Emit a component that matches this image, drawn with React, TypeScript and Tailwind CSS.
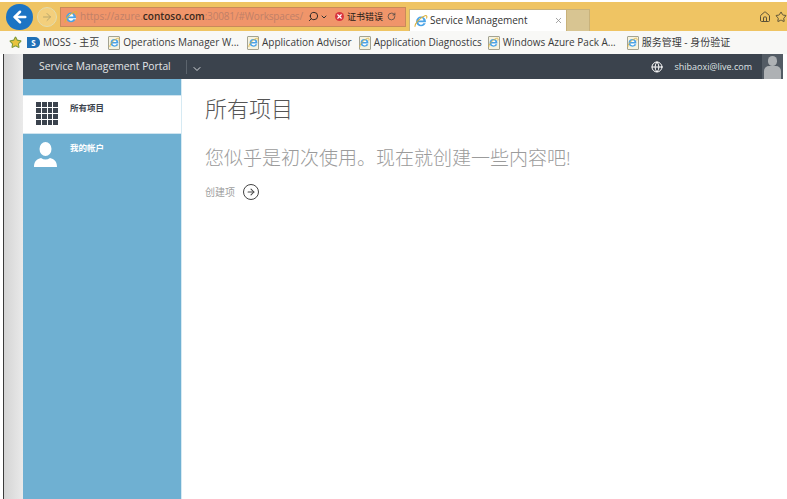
import { ArrowLeft, ArrowRight, ChevronDown, Globe, Home, RotateCw, Search, Star, X } from "lucide-react";

const IeIcon = ({ size = 12 }: { size?: number }) => (
  <svg width={size} height={size} viewBox="0 0 16 16" className="shrink-0">
    <circle cx="8" cy="8.5" r="5.6" fill="#4aa3e6" />
    <path d="M5.2 7.4h5.6a2.8 2.8 0 0 0-5.6 0z" fill="#fff" />
    <path d="M4.9 9.4a3 3 0 0 0 5.7 1.1h3.2V9.4z" fill="#fff" />
    <path d="M1.3 14.6C.3 12 6 4 12.6 1.9c2.2-.6 2.6 1.2 1.6 3.3" fill="none" stroke="#e0b23a" strokeWidth="1.2" />
  </svg>
);

const PageIcon = () => (
  <span className="flex h-[14px] w-[12px] shrink-0 items-center justify-center rounded-[1px] border border-[#a3a392] bg-[#f7f3df]">
    <IeIcon size={11} />
  </span>
);

const Bookmark = ({ label, className }: { label: string; className?: string }) => (
  <div className={`flex items-center gap-[3px] ${className ?? ""}`}>
    <PageIcon />
    <span className="whitespace-nowrap">{label}</span>
  </div>
);

const App = () => {
  return (
    <div className="flex h-[499px] w-[787px] flex-col overflow-hidden bg-white font-['Open_Sans','Noto_Sans_CJK_SC',sans-serif]">
      {/* browser tabs + address */}
      <div className="mt-[2px] flex h-[29px] items-center bg-[#efc463] pl-[6px]">
        <div className="flex h-[26px] w-[27px] items-center justify-center rounded-full bg-[#1c74c4]">
          <ArrowLeft size={18} strokeWidth={3.4} className="text-white" />
        </div>
        <div className="ml-[4px] flex h-[20px] w-[20px] items-center justify-center rounded-full border border-[#e2dcae] bg-[#f3cf7c]">
          <ArrowRight size={12} className="text-[#b9a76c]" />
        </div>
        <div className="ml-[3px] flex h-[20px] w-[346px] items-center border border-[#c98a5a] bg-[#f0956a] pl-[3px] text-[10px]">
          <IeIcon size={14} />
          <span className="ml-[2px] text-[#c08068]">https://azure.</span>
          <span className="font-semibold text-[#3a2a20]">contoso.com</span>
          <span className="tracking-[-0.15px] text-[#c08068]">:30081/#Workspaces/</span>
          <Search size={11} strokeWidth={2} className="ml-[5px] -scale-x-100 text-[#222]" />
          <ChevronDown size={8} strokeWidth={3} className="ml-[1px] text-[#333]" />
          <span className="ml-[7px] flex h-[9px] w-[9px] items-center justify-center rounded-full bg-[#d8343f]">
            <X size={7} strokeWidth={4} className="text-white" />
          </span>
          <span className="ml-[3px] whitespace-nowrap text-[9px] text-[#2a2018]">证书错误</span>
          <RotateCw size={9} className="ml-[4px] text-[#444]" />
        </div>
        <div className="ml-[3px] flex h-[22px] w-[158px] items-center self-end border border-b-0 border-[#c9b27a] bg-white pl-[4px] text-[10px] text-[#333]">
          <IeIcon size={14} />
          <span className="ml-[2px]">Service Management</span>
          <X size={9} className="ml-auto mr-[3px] text-[#8a8a8a]" />
        </div>
        <div className="h-[22px] w-[23px] self-end border-r border-t border-[#c9b27a] bg-[#d8c592]" />
        <div className="ml-auto flex items-center gap-[4px] overflow-hidden">
          <Home size={12} className="text-[#5a5138]" />
          <Star size={12} className="text-[#5a5138]" />
        </div>
      </div>

      {/* favorites bar */}
      <div className="flex h-[23px] items-center bg-[#f8f8f6] pl-[9px] text-[10px] text-[#3a3a3a]">
        <Star size={13} fill="#e8c33c" className="text-[#7d9a3a]" />
        <span className="ml-[5px] flex h-[11px] w-[13px] items-center justify-center rounded-r-[5px] bg-[#1f70b8] text-[8px] font-bold text-white">S</span>
        <span className="ml-[3px] whitespace-nowrap">MOSS - 主页</span>
        <Bookmark label="Operations Manager W..." className="ml-[9px]" />
        <Bookmark label="Application Advisor" className="ml-[8px]" />
        <Bookmark label="Application Diagnostics" className="ml-[7px]" />
        <Bookmark label="Windows Azure Pack A..." className="ml-[6px]" />
        <Bookmark label="服务管理 - 身份验证" className="ml-[11px]" />
      </div>

      {/* page */}
      <div className="flex min-h-0 flex-1">
        <div className="ml-[3px] w-[20px] shrink-0 border-l border-[#3a3a3a] bg-gradient-to-r from-[#d4d4d4] to-[#eaeaea]" />
        <div className="flex min-w-0 flex-1 flex-col">
          <header className="mr-[4px] flex h-[25px] shrink-0 items-center bg-[#3b434d] pl-[16px] text-[10.3px] text-[#e4e6e8]">
            <span>Service Management Portal</span>
            <span className="ml-[15px] h-[14px] w-px bg-[#5c646d]" />
            <ChevronDown size={12} className="ml-[4px] mt-[4px] text-[#d5d8da]" />
            <Globe size={12} className="ml-auto text-white" />
            <span className="ml-[11px] text-[9px] text-[#dfe2e4]">shibaoxi@live.com</span>
            <div className="relative ml-[10px] h-[25px] w-[21px] overflow-hidden bg-[#535b64]">
              <span className="absolute left-[6px] top-[2px] h-[10px] w-[9px] rounded-full bg-[#aeb1b4]" />
              <span className="absolute left-[2px] top-[12px] h-[13px] w-[17px] rounded-t-[5px] bg-[#aeb1b4]" />
            </div>
          </header>
          <div className="flex min-h-0 flex-1">
            <aside className="w-[159px] shrink-0 border-r border-[#d6eaf3] bg-[#6fb0d2] pt-[16px]">
              <div className="flex h-[39px] border-y border-[#cfe4ef] bg-white pl-[13px] pt-[6px]">
                <div className="grid h-[23px] w-[22px] grid-cols-4 gap-px">
                  {Array.from({ length: 16 }).map((_, i) => (
                    <span key={i} className="bg-[#3b434d]" />
                  ))}
                </div>
                <span className="ml-[12px] text-[8.5px] font-bold leading-[12px] text-[#3b434d]">所有项目</span>
              </div>
              <div className="flex pl-[11px] pt-[8px]">
                <svg width="23" height="25" viewBox="0 0 23 25" className="shrink-0">
                  <ellipse cx="11.5" cy="7" rx="6" ry="7" fill="#fff" />
                  <path d="M0 25c0-6 3-8 7-9 3 2 6 2 9 0 4 1 7 3 7 9z" fill="#fff" />
                </svg>
                <span className="ml-[13px] text-[8.5px] font-bold leading-[12px] text-white">我的帐户</span>
              </div>
            </aside>
            <main className="min-w-0 flex-1 pl-[23px] pt-[15px]">
              <h1 className="text-[22px] font-light leading-[28px] text-[#555]">所有项目</h1>
              <p className="mt-[23px] text-[19px] font-light leading-[26px] text-[#9b9b9b]">您似乎是初次使用。现在就创建一些内容吧!</p>
              <div className="mt-[13px] flex items-center">
                <span className="text-[10px] text-[#a0a0a0]">创建项</span>
                <span className="ml-[8px] flex h-[16px] w-[16px] items-center justify-center rounded-full border-[1.5px] border-[#444]">
                  <ArrowRight size={10} strokeWidth={2.5} className="text-[#444]" />
                </span>
              </div>
            </main>
          </div>
        </div>
      </div>
    </div>
  );
};

export default App;
